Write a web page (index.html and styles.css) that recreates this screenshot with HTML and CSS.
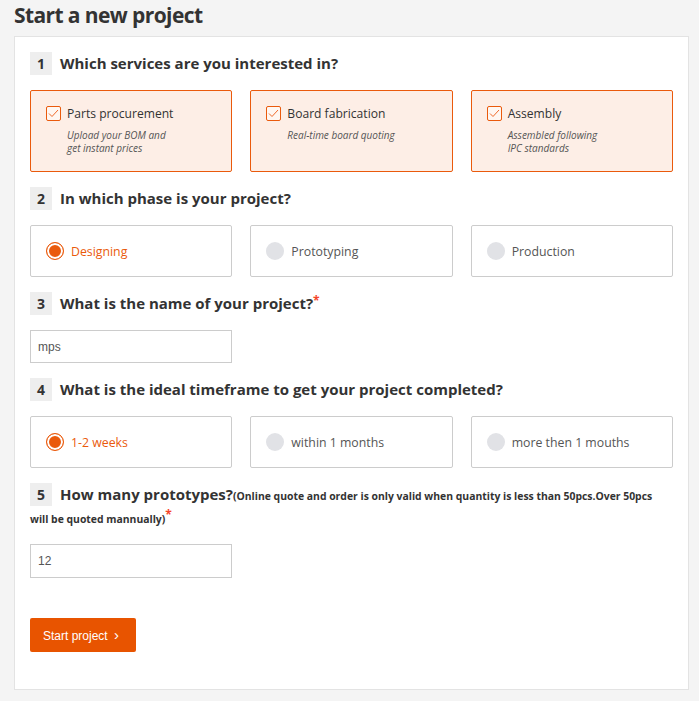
FILE: index.html
```html
<!DOCTYPE html>
<html lang="en">
<head>
    <meta charset="UTF-8">
    <meta name="viewport" content="width=device-width, initial-scale=1.0">
    <title>Start a new project</title>
    <link rel="stylesheet" href="styles.css">
</head>
<body>
    <h1 class="page-title">Start a new project</h1>

    <form class="project-card">
        <!-- 1. services -->
        <div class="step">
            <h2 class="step-title"><span class="step-num">1</span>Which services are you interested in?</h2>
            <div class="options">
                <label class="service checked">
                    <span class="checkbox"><svg width="11" height="9" viewBox="0 0 11 9"><path d="M1 4.5 L4 7.5 L10 1" fill="none" stroke="#f06a2a" stroke-width="1"/></svg></span>
                    <span class="service-text">
                        <span class="service-name">Parts procurement</span>
                        <span class="service-desc">Upload your BOM and<br>get instant prices</span>
                    </span>
                </label>
                <label class="service checked">
                    <span class="checkbox"><svg width="11" height="9" viewBox="0 0 11 9"><path d="M1 4.5 L4 7.5 L10 1" fill="none" stroke="#f06a2a" stroke-width="1"/></svg></span>
                    <span class="service-text">
                        <span class="service-name">Board fabrication</span>
                        <span class="service-desc">Real-time board quoting</span>
                    </span>
                </label>
                <label class="service checked">
                    <span class="checkbox"><svg width="11" height="9" viewBox="0 0 11 9"><path d="M1 4.5 L4 7.5 L10 1" fill="none" stroke="#f06a2a" stroke-width="1"/></svg></span>
                    <span class="service-text">
                        <span class="service-name">Assembly</span>
                        <span class="service-desc">Assembled following<br>IPC standards</span>
                    </span>
                </label>
            </div>
        </div>

        <!-- 2. phase -->
        <div class="step">
            <h2 class="step-title"><span class="step-num">2</span>In which phase is your project?</h2>
            <div class="options">
                <label class="choice active"><span class="radio"></span>Designing</label>
                <label class="choice"><span class="radio"></span>Prototyping</label>
                <label class="choice"><span class="radio"></span>Production</label>
            </div>
        </div>

        <!-- 3. name -->
        <div class="step">
            <h2 class="step-title"><span class="step-num">3</span>What is the name of your project?<sup class="req">*</sup></h2>
            <input class="text-input" type="text" value="mps">
        </div>

        <!-- 4. timeframe -->
        <div class="step">
            <h2 class="step-title"><span class="step-num">4</span>What is the ideal timeframe to get your project completed?</h2>
            <div class="options">
                <label class="choice active"><span class="radio"></span>1-2 weeks</label>
                <label class="choice"><span class="radio"></span>within 1 months</label>
                <label class="choice"><span class="radio"></span>more then 1 mouths</label>
            </div>
        </div>

        <!-- 5. quantity -->
        <div class="step">
            <h2 class="step-title"><span class="step-num">5</span>How many prototypes?<small class="note">(Online quote and order is only valid when quantity is less than 50pcs.Over 50pcs will be quoted mannually)</small><sup class="req">*</sup></h2>
            <input class="text-input tall" type="text" value="12">
        </div>

        <button class="btn-start" type="button">Start project <span class="arrow">&#8250;</span></button>
    </form>
</body>
</html>
```

FILE: styles.css
```css
body {
    margin: 0;
    padding: 0 10px 12px 14px;
    background-color: #f4f4f4;
    font-family: 'Open Sans', sans-serif;
    color: #333;
}
.page-title {
    margin: 0;
    height: 36px;
    line-height: 30px;
    font-size: 21px;
    font-weight: 700;
    letter-spacing: -0.6px;
    color: #333;
}
.project-card {
    background-color: #fff;
    border: 1px solid #e3e3e3;
    padding: 15px 15px 37px;
}
.step {
    margin-bottom: 15px;
}
.step-title {
    margin: 0 0 15px;
    font-size: 15px;
    font-weight: 700;
    line-height: 23px;
    color: #333;
}
.step-num {
    display: inline-block;
    width: 22px;
    height: 23px;
    margin-right: 8px;
    background-color: #eee;
    text-align: center;
    font-size: 14px;
    vertical-align: top;
}
.req {
    color: #f5452a;
    font-size: 12px;
    line-height: 0;
    vertical-align: 4px;
}
.note {
    font-size: 10.4px;
    font-weight: 700;
    line-height: 1;
    color: #333;
}
.options {
    display: grid;
    grid-template-columns: repeat(3, 1fr);
    gap: 18px;
}
.service {
    display: flex;
    align-items: flex-start;
    gap: 6px;
    height: 82px;
    box-sizing: border-box;
    padding: 15px;
    border: 1px solid #ea5a0c;
    border-radius: 2px;
    background-color: #fdeee6;
}
.checkbox {
    flex: none;
    display: flex;
    align-items: center;
    justify-content: center;
    width: 15px;
    height: 15px;
    box-sizing: border-box;
    border: 1px solid #ea5a0c;
    border-radius: 2px;
    background-color: #fff7f2;
}
.service-text {
    display: flex;
    flex-direction: column;
}
.service-name {
    font-size: 12.1px;
    line-height: 15px;
    color: #333;
}
.service-desc {
    margin-top: 8px;
    font-size: 10px;
    font-style: italic;
    line-height: 13px;
    color: #555;
}
.choice {
    display: flex;
    align-items: center;
    gap: 7px;
    height: 52px;
    box-sizing: border-box;
    padding: 0 15px;
    border: 1px solid #ccc;
    border-radius: 2px;
    font-size: 12.3px;
    color: #555;
}
.radio {
    width: 18px;
    height: 18px;
    border-radius: 50%;
    background-color: #e1e2e6;
}
.choice.active {
    color: #ea5a0c;
}
.choice.active .radio {
    box-sizing: border-box;
    border: 1.5px solid #ea5a0c;
    background-color: #ea5a0c;
    box-shadow: inset 0 0 0 2px #fff;
}
.text-input {
    display: block;
    width: calc((100% - 36px) / 3);
    height: 33px;
    box-sizing: border-box;
    padding: 0 7px;
    border: 1px solid #ccc;
    font-family: 'Liberation Sans', Arial, sans-serif;
    font-size: 12px;
    color: #555;
    outline: none;
}
.text-input.tall {
    height: 34px;
}
.btn-start {
    margin-top: 25px;
    height: 34px;
    padding: 0 17px 0 13px;
    border: none;
    border-radius: 2px;
    background-color: #e85400;
    font-family: 'Liberation Sans', Arial, sans-serif;
    font-size: 12px;
    color: #fff;
    cursor: pointer;
}
.arrow {
    margin-left: 3px;
    font-size: 15px;
    line-height: 1;
}
```
